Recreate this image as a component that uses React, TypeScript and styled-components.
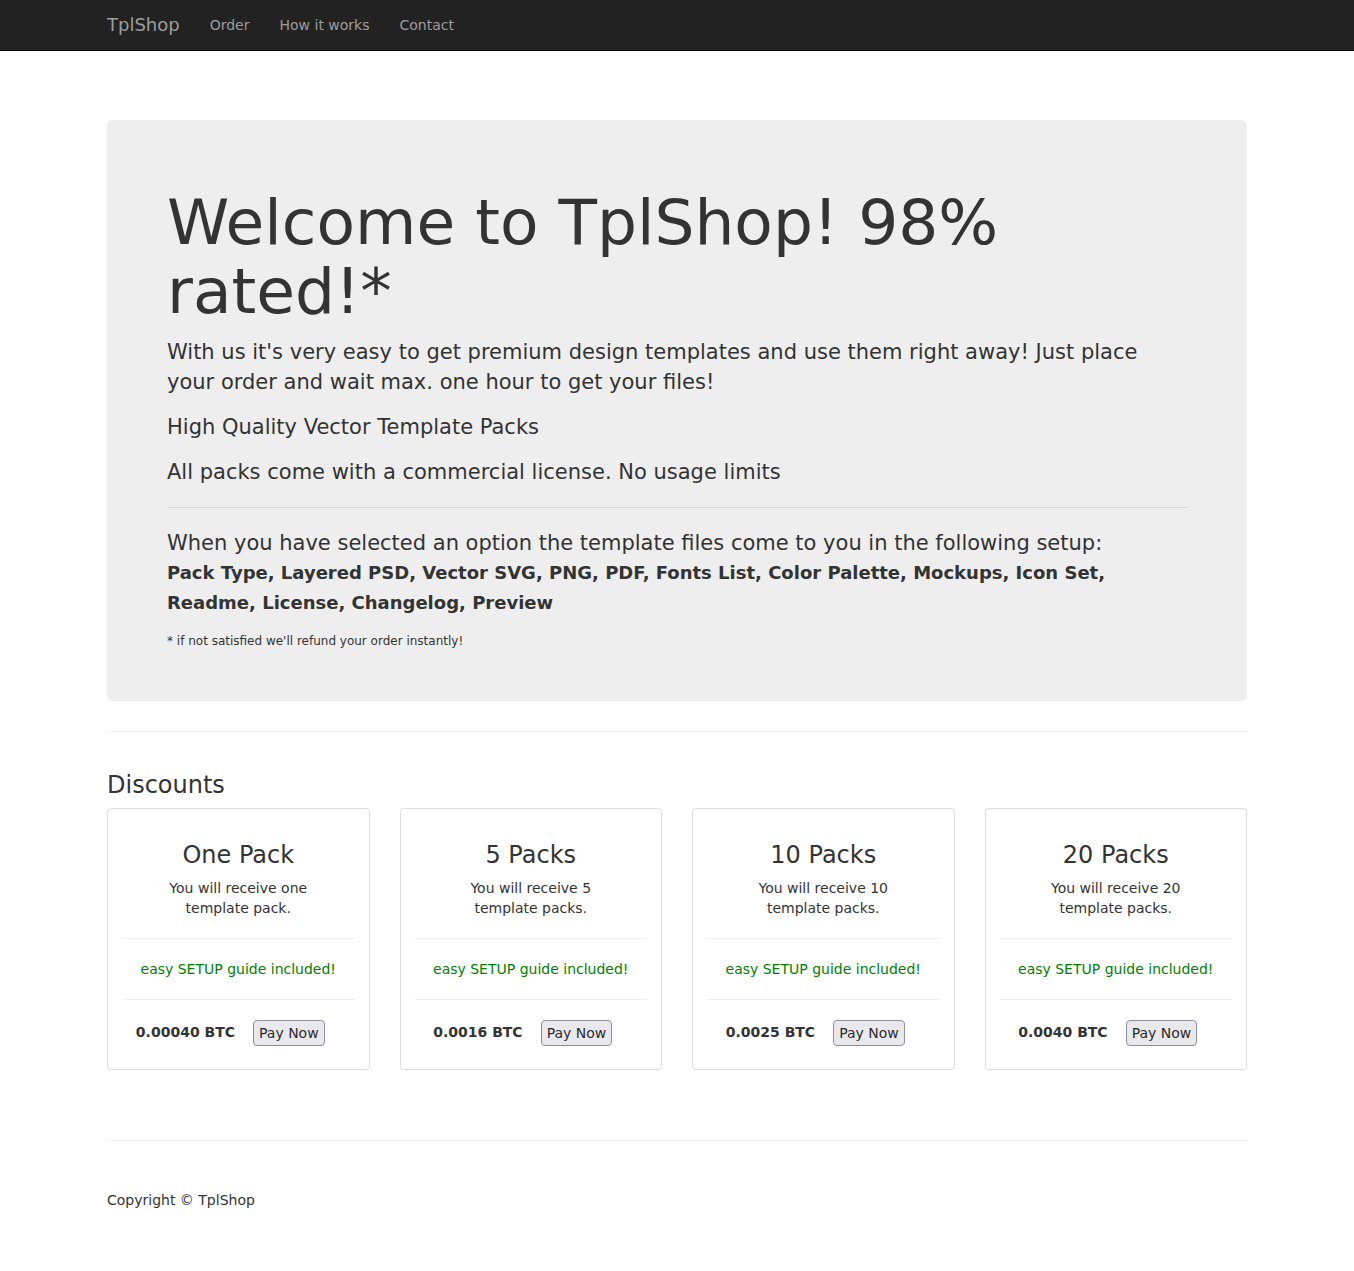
import React from "react";
import styled, { createGlobalStyle } from "styled-components";

const GlobalStyle = createGlobalStyle`
    * { box-sizing: border-box; }
    body {
        margin: 0;
        font-family: "DejaVu Sans", Verdana, sans-serif;
        font-size: 14px;
        line-height: 1.42857;
        color: #333;
        background: #fff;
    }
`;

const Navbar = styled.nav`
    height: 51px;
    background-color: #222;
    border-bottom: 1px solid #080808;
`;

const Container = styled.div`
    width: 1170px;
    margin: 0 auto;
    padding: 0 15px;
`;

const NavInner = styled(Container)`
    display: flex;
    align-items: center;
    height: 50px;
`;

const Brand = styled.a`
    font-size: 18px;
    line-height: 20px;
    color: #9d9d9d;
    text-decoration: none;
    padding-right: 15px;
`;

const NavLink = styled.a`
    font-size: 14px;
    line-height: 20px;
    color: #9d9d9d;
    text-decoration: none;
    padding: 15px;
`;

const Main = styled(Container)`
    padding-top: 69px;
`;

const Jumbotron = styled.div`
    background-color: #eee;
    border-radius: 6px;
    padding: 48px 60px 51px;
    h1 {
        font-size: 63px;
        font-weight: 500;
        line-height: 1.1;
        margin: 20px 0 10px;
    }
`;

const Lead = styled.p`
    font-size: 21px;
    font-weight: 400;
    line-height: 30px;
    margin: 0 0 15px;
`;

const Setup = styled.span`
    display: block;
    font-size: 18px;
    font-weight: bold;
    line-height: 30px;
`;

const Note = styled.p`
    font-size: 12px;
    line-height: 17px;
    margin: 0;
`;

const Rule = styled.hr<{ $tone?: string; $space?: number }>`
    border: 0;
    border-top: 1px solid ${(p) => p.$tone || "#eee"};
    margin: ${(p) => p.$space ?? 20}px 0;
    height: 0;
`;

const SectionTitle = styled.h3`
    font-size: 24px;
    font-weight: 500;
    line-height: 1.1;
    margin: 40px 0 10px;
`;

const CardGrid = styled.div`
    display: grid;
    grid-template-columns: repeat(4, 1fr);
    gap: 30px;
`;

const Card = styled.div`
    border: 1px solid #ddd;
    border-radius: 4px;
    padding: 14px;
    text-align: center;
    h3 {
        font-size: 24px;
        font-weight: 500;
        line-height: 1.1;
        margin: 19px 0 10px;
    }
`;

const Desc = styled.p`
    margin: 0 24px;
    line-height: 20px;
`;

const Extra = styled.p`
    color: #008000;
    margin: 0;
    line-height: 20px;
`;

const PriceRow = styled.div`
    display: flex;
    justify-content: center;
    align-items: center;
    gap: 18px;
    padding-right: 16px;
    margin-bottom: 9px;
    b { font-weight: bold; }
`;

const PayButton = styled.button`
    font-family: "DejaVu Sans", Verdana, sans-serif;
    font-size: 14px;
    line-height: 18px;
    padding: 3px 5px;
    color: #2b2b2b;
    background: #e9e9ed;
    border: 1px solid #8f8f9d;
    border-radius: 4px;
`;

const Footer = styled.footer`
    margin-top: 70px;
    padding-bottom: 60px;
    p { margin: 50px 0 0; }
`;

const packs = [
    { title: "One Pack", desc: "You will receive one template pack.", price: "0.00040 BTC" },
    { title: "5 Packs", desc: "You will receive 5 template packs.", price: "0.0016 BTC" },
    { title: "10 Packs", desc: "You will receive 10 template packs.", price: "0.0025 BTC" },
    { title: "20 Packs", desc: "You will receive 20 template packs.", price: "0.0040 BTC" },
];

const App = () => (
    <>
        <GlobalStyle />
        <Navbar>
            <NavInner>
                <Brand href="#">TplShop</Brand>
                <NavLink href="#">Order</NavLink>
                <NavLink href="#">How it works</NavLink>
                <NavLink href="#">Contact</NavLink>
            </NavInner>
        </Navbar>
        <Main>
            <Jumbotron>
                <h1>Welcome to TplShop! 98% rated!*</h1>
                <Lead>
                    With us it's very easy to get premium design templates and use them right away! Just place your
                    order and wait max. one hour to get your files!
                </Lead>
                <Lead>High Quality Vector Template Packs</Lead>
                <Lead>All packs come with a commercial license. No usage limits</Lead>
                <Rule $tone="#d5d5d5" />
                <Lead>
                    When you have selected an option the template files come to you in the following setup:
                    <Setup>
                        Pack Type, Layered PSD, Vector SVG, PNG, PDF, Fonts List, Color Palette, Mockups, Icon Set,
                        Readme, License, Changelog, Preview
                    </Setup>
                </Lead>
                <Note>* if not satisfied we'll refund your order instantly!</Note>
            </Jumbotron>
            <Rule $space={30} />
            <SectionTitle>Discounts</SectionTitle>
            <CardGrid>
                {packs.map((pack) => (
                    <Card key={pack.title}>
                        <h3>{pack.title}</h3>
                        <Desc>{pack.desc}</Desc>
                        <Rule />
                        <Extra>easy SETUP guide included!</Extra>
                        <Rule />
                        <PriceRow>
                            <b>{pack.price}</b>
                            <PayButton>Pay Now</PayButton>
                        </PriceRow>
                    </Card>
                ))}
            </CardGrid>
            <Footer>
                <Rule $space={0} />
                <p>Copyright © TplShop</p>
            </Footer>
        </Main>
    </>
);

export default App;
